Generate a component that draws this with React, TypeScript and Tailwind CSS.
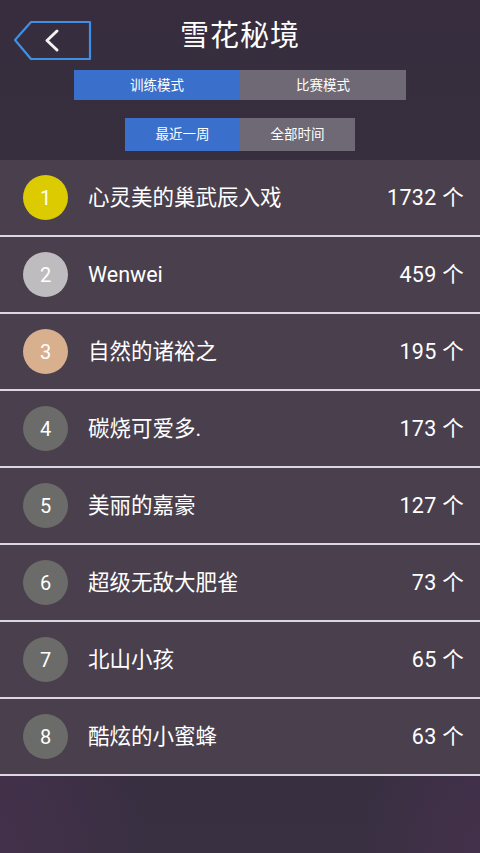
import { useState } from 'react';

type Entry = { rank: number; name: string; count: number };

const entries: Entry[] = [
  { rank: 1, name: '心灵美的巢武辰入戏', count: 1732 },
  { rank: 2, name: 'Wenwei', count: 459 },
  { rank: 3, name: '自然的诸裕之', count: 195 },
  { rank: 4, name: '碳烧可爱多.', count: 173 },
  { rank: 5, name: '美丽的嘉豪', count: 127 },
  { rank: 6, name: '超级无敌大肥雀', count: 73 },
  { rank: 7, name: '北山小孩', count: 65 },
  { rank: 8, name: '酷炫的小蜜蜂', count: 63 },
];

const badgeColor = (rank: number) => {
  if (rank === 1) return 'bg-[#dccb00]';
  if (rank === 2) return 'bg-[#bfbcc0]';
  if (rank === 3) return 'bg-[#d8b08d]';
  return 'bg-[#6b6b69]';
};

function BackButton() {
  return (
    <svg width="80" height="42" viewBox="0 0 80 42" className="block">
      <path d="M2 20 L18 2 L77 2 L77 39 L18 39 Z" fill="none" stroke="#3f8fe4" strokeWidth="2.2" strokeLinejoin="round" />
      <path d="M44 11 L34 20.5 L44 30" fill="none" stroke="#f2f2f2" strokeWidth="3" strokeLinecap="round" strokeLinejoin="round" />
    </svg>
  );
}

function Segmented({ options, active, onChange, width, height }: {
  options: string[]; active: number; onChange: (i: number) => void; width: string; height: string;
}) {
  return (
    <div className={`flex ${width} ${height}`}>
      {options.map((o, i) => (
        <button
          key={o}
          onClick={() => onChange(i)}
          className={`flex-1 flex items-center justify-center text-[13.5px] text-white ${i === active ? 'bg-[#3a70cc]' : 'bg-[#6e6975]'}`}
        >
          {o}
        </button>
      ))}
    </div>
  );
}

export default function App() {
  const [mode, setMode] = useState(0);
  const [range, setRange] = useState(0);

  return (
    <div
      className="w-[480px] h-[853px] overflow-hidden flex flex-col text-white bg-[radial-gradient(ellipse_at_0%_100%,#44304b_0%,transparent_22%),radial-gradient(ellipse_at_100%_100%,#44304b_0%,transparent_18%),linear-gradient(180deg,#372d3e_0%,#352e3d_60%,#393042_100%)]"
      style={{ fontFamily: "Roboto, 'Noto Sans CJK SC', sans-serif" }}
    >
      {/* header */}
      <div className="h-[160px] flex flex-col items-center">
        <div className="w-full grid grid-cols-[1fr_auto_1fr] items-center pt-[12px] h-[70px]">
          <div className="pl-[13px]">
            <BackButton />
          </div>
          <h1 className="text-[29px] leading-none tracking-[1px] pb-[9px]">雪花秘境</h1>
          <div />
        </div>
        <Segmented options={['训练模式', '比赛模式']} active={mode} onChange={setMode} width="w-[332px]" height="h-[30px]" />
        <div className="h-[18px]" />
        <Segmented options={['最近一周', '全部时间']} active={range} onChange={setRange} width="w-[230px]" height="h-[33px]" />
      </div>

      {/* ranking list */}
      <div className="flex flex-col">
        {entries.map(e => (
          <div key={e.rank} className="h-[77px] flex flex-col bg-[#4a3f4d]">
            <div className="h-[75px] flex items-center pl-[23px] pr-[16px]">
              <div className={`w-[45px] h-[45px] rounded-full flex items-center justify-center text-[20px] ${badgeColor(e.rank)}`}>
                {e.rank}
              </div>
              <div className="flex-1 pl-[20px] text-[21.5px] leading-none">{e.name}</div>
              <div className="text-[21.5px] leading-none tracking-[0.3px]">{e.count} 个</div>
            </div>
            <div className="h-[2px] bg-[#dcd8e0]" />
          </div>
        ))}
      </div>
    </div>
  );
}
